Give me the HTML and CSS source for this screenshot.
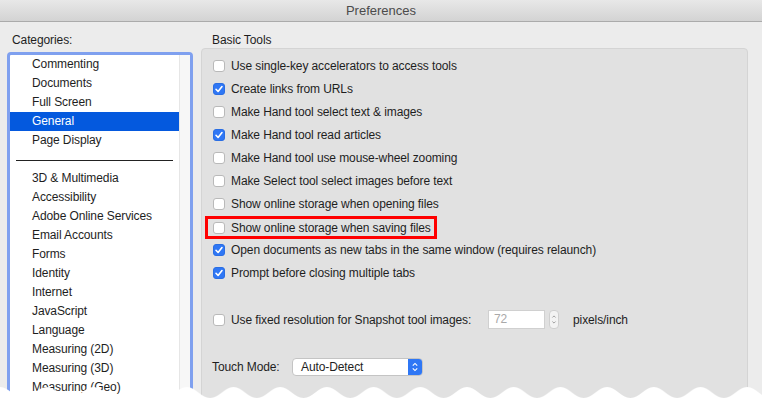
FILE: index.html
```html
<!DOCTYPE html>
<html lang="en">
<head>
    <meta charset="UTF-8">
    <title>Preferences</title>
    <link rel="stylesheet" href="styles.css">
</head>
<body>
    <div class="window">
        <div class="titlebar">Preferences</div>
        <div class="content">
            <div class="categories">
                <div class="label">Categories:</div>
                <div class="listbox">
                    <ul class="list">
                        <li>Commenting</li>
                        <li>Documents</li>
                        <li>Full Screen</li>
                        <li class="selected">General</li>
                        <li>Page Display</li>
                        <li class="sep"><span></span></li>
                        <li>3D &amp; Multimedia</li>
                        <li>Accessibility</li>
                        <li>Adobe Online Services</li>
                        <li>Email Accounts</li>
                        <li>Forms</li>
                        <li>Identity</li>
                        <li>Internet</li>
                        <li>JavaScript</li>
                        <li>Language</li>
                        <li>Measuring (2D)</li>
                        <li>Measuring (3D)</li>
                        <li>Measuring (Geo)</li>
                        <li>Multimedia (legacy)</li>
                    </ul>
                    <div class="track"></div>
                </div>
            </div>
            <div class="panel">
                <div class="label">Basic Tools</div>
                <div class="group">
                    <div class="row"><span class="box"></span>Use single-key accelerators to access tools</div>
                    <div class="row"><span class="box checked"><svg viewBox="0 0 12 12"><path d="M3 6.3 L5.1 8.5 L9 3.6"/></svg></span>Create links from URLs</div>
                    <div class="row"><span class="box"></span>Make Hand tool select text &amp; images</div>
                    <div class="row"><span class="box checked"><svg viewBox="0 0 12 12"><path d="M3 6.3 L5.1 8.5 L9 3.6"/></svg></span>Make Hand tool read articles</div>
                    <div class="row"><span class="box"></span>Make Hand tool use mouse-wheel zooming</div>
                    <div class="row"><span class="box"></span>Make Select tool select images before text</div>
                    <div class="row"><span class="box"></span>Show online storage when opening files</div>
                    <div class="row"><span class="highlight"><span class="box"></span>Show online storage when saving files</span></div>
                    <div class="row"><span class="box checked"><svg viewBox="0 0 12 12"><path d="M3 6.3 L5.1 8.5 L9 3.6"/></svg></span>Open documents as new tabs in the same window (requires relaunch)</div>
                    <div class="row"><span class="box checked"><svg viewBox="0 0 12 12"><path d="M3 6.3 L5.1 8.5 L9 3.6"/></svg></span>Prompt before closing multiple tabs</div>

                    <div class="row snap">
                        <span class="box"></span>
                        <span class="snap-text">Use fixed resolution for Snapshot tool images:</span>
                        <span class="field">72</span>
                        <span class="stepper"><svg viewBox="0 0 10 19"><path d="M3 7 L5 5 L7 7 M3 12 L5 14 L7 12"/></svg></span>
                        <span class="unit">pixels/inch</span>
                    </div>

                    <div class="row touch">
                        <span class="touch-label">Touch Mode:</span>
                        <span class="popup">
                            <span class="popup-text">Auto-Detect</span>
                            <span class="popup-arrows"><svg viewBox="0 0 14 18"><path d="M4.5 7.5 L7 5 L9.5 7.5 M4.5 10.5 L7 13 L9.5 10.5"/></svg></span>
                        </span>
                    </div>
                </div>
            </div>
        </div>
        <svg class="tear" viewBox="0 0 762 30" preserveAspectRatio="none">
            <defs>
                <pattern id="wave" width="46.7" height="30" patternUnits="userSpaceOnUse">
                    <path d="M0 5 C9 5 14 16 23.35 16 S37.7 5 46.7 5 V30 H0 Z" fill="#fff"/>
                </pattern>
            </defs>
            <rect x="-0.5" y="0" width="763" height="30" fill="url(#wave)"/>
        </svg>
    </div>
</body>
</html>
```

FILE: styles.css
```css
body {
    margin: 0;
    background: #fff;
    font-family: "Liberation Sans", Arial, sans-serif;
    font-size: 12px;
    letter-spacing: -0.1px;
    color: #1e1e1e;
}
.window {
    position: relative;
    width: 762px;
    height: 412px;
    overflow: hidden;
    background: #ececec;
}
.titlebar {
    height: 21px;
    line-height: 22px;
    text-align: center;
    font-size: 13px;
    letter-spacing: 0;
    color: #4b4b4b;
    background: linear-gradient(#e8e8e8, #d3d3d3);
    border-bottom: 1px solid #ababab;
}
.content {
    display: flex;
    padding: 11px 0 0 7px;
    gap: 8px;
}
.label {
    height: 15px;
    line-height: 15px;
}
.categories {
    width: 186px;
}
.categories .label {
    padding-left: 5px;
}
.listbox {
    display: flex;
    margin-top: 4px;
    height: 400px;
    border: 3px solid #7fa0ef;
    border-radius: 4px;
    background: #fff;
}
.list {
    list-style: none;
    margin: 0;
    padding: 0;
    flex: 1;
}
.list li {
    height: 19px;
    line-height: 19px;
    padding-left: 22px;
}
.list li.selected {
    background: #0459de;
    color: #fff;
}
.list li.sep {
    display: flex;
    align-items: center;
    padding: 0 6px;
}
.list li.sep span {
    flex: 1;
    height: 1px;
    margin-top: 1px;
    background: #222;
}
.track {
    width: 10px;
    background: #f7f7f7;
    border-left: 1px solid #e6e6e6;
}
.panel {
    width: 547px;
}
.panel .label {
    padding-left: 11px;
}
.group {
    height: 400px;
    box-sizing: border-box;
    padding: 5px 0 0 11px;
    background: #e1e1e1;
    border: 1px solid #d4d4d4;
    border-radius: 4px;
}
.row {
    display: flex;
    align-items: center;
    height: 23px;
}
.box {
    display: flex;
    align-items: center;
    justify-content: center;
    width: 12px;
    height: 12px;
    box-sizing: border-box;
    margin-right: 6px;
    background: #fff;
    border: 1px solid #b9b9b9;
    border-radius: 3px;
}
.box.checked {
    background: #2f77f5;
    border-color: #2a6ee3;
}
.box svg {
    width: 12px;
    height: 12px;
    flex: none;
}
.box svg path {
    fill: none;
    stroke: #fff;
    stroke-width: 1.6;
    stroke-linecap: round;
    stroke-linejoin: round;
}
.highlight {
    display: flex;
    align-items: center;
    height: 23px;
    box-sizing: border-box;
    margin: 2px 0 0 -8px;
    padding: 0 3px 0 5px;
    border: 3px solid #f00;
}
.snap {
    margin-top: 24px;
}
.snap-text {
    width: 257px;
}
.field {
    width: 57px;
    height: 19px;
    box-sizing: border-box;
    padding-left: 5px;
    line-height: 17px;
    color: #a9a9a9;
    background: #fff;
    border: 1px solid #d0d0d0;
}
.stepper {
    width: 10px;
    height: 19px;
    margin-left: 4px;
    box-sizing: border-box;
    background: #f3f3f3;
    border: 1px solid #cfcfcf;
    border-radius: 4px;
}
.stepper svg {
    display: block;
    width: 8px;
    height: 17px;
}
.stepper path {
    fill: none;
    stroke: #8a8a8a;
    stroke-width: 1;
}
.unit {
    margin-left: 14px;
}
.touch {
    margin: 24px 0 0 -1px;
}
.touch-label {
    width: 80px;
}
.popup {
    display: flex;
    width: 131px;
    height: 18px;
    box-sizing: border-box;
    background: #fff;
    border: 1px solid #c4c4c4;
    border-radius: 4px;
    overflow: hidden;
}
.popup-text {
    flex: 1;
    padding-left: 8px;
    line-height: 16px;
}
.popup-arrows {
    width: 14px;
    background: #2f77f5;
}
.popup-arrows svg {
    display: block;
    width: 14px;
    height: 16px;
}
.popup-arrows path {
    fill: none;
    stroke: #fff;
    stroke-width: 1.3;
}
.tear {
    position: absolute;
    left: 0;
    top: 382px;
    width: 762px;
    height: 30px;
}
```
